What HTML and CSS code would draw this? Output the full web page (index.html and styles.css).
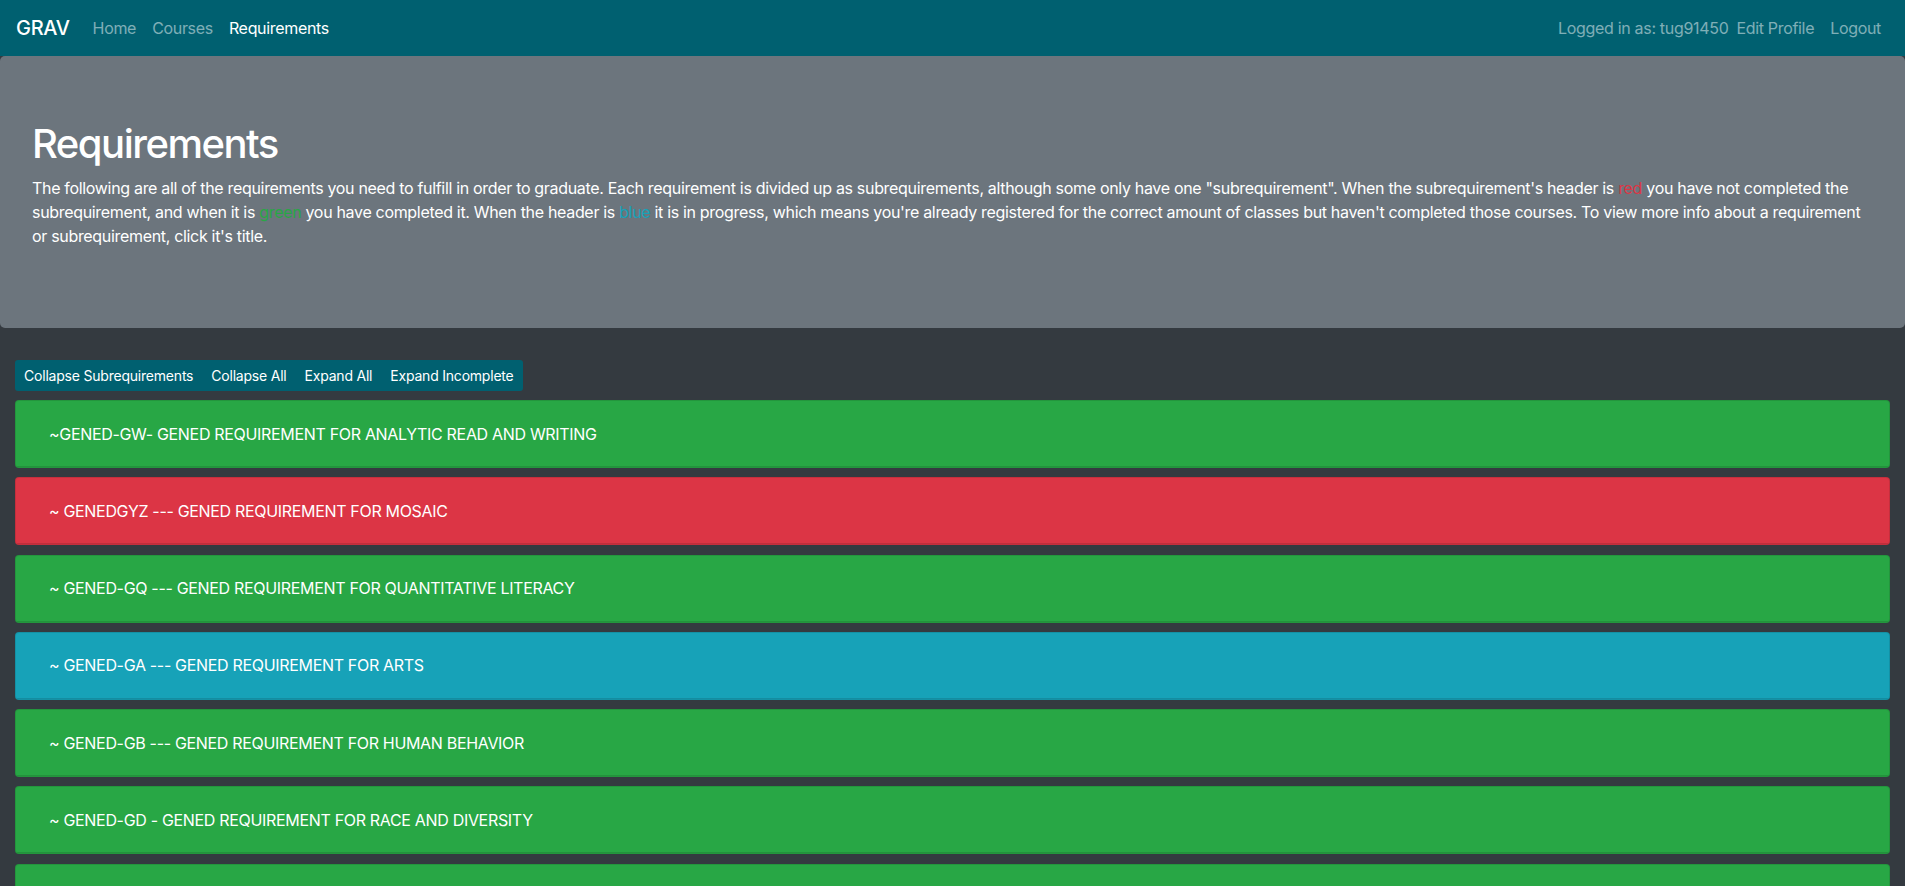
FILE: index.html
```html
<!DOCTYPE html>
<html lang="en">
<head>
<meta charset="utf-8">
<title>Requirements</title>
<link rel="stylesheet" href="styles.css">
</head>
<body>
<nav class="navbar">
  <a class="brand" href="#">GRAV</a>
  <ul class="nav">
    <li><a class="nav-link" href="#">Home</a></li>
    <li><a class="nav-link" href="#">Courses</a></li>
    <li><a class="nav-link active" href="#">Requirements</a></li>
  </ul>
  <div class="nav-right">
    <span class="nav-text">Logged in as: tug91450</span>
    <a class="nav-link" href="#">Edit Profile</a>
    <a class="nav-link" href="#">Logout</a>
  </div>
</nav>

<section class="jumbotron">
  <h1 class="title">Requirements</h1>
  <p class="lead">The following are all of the requirements you need to fulfill in order to graduate. Each requirement is divided up as subrequirements, although some only have one "subrequirement". When the subrequirement's header is <span class="t-red">red</span> you have not completed the subrequirement, and when it is <span class="t-green">green</span> you have completed it. When the header is <span class="t-blue">blue</span> it is in progress, which means you're already registered for the correct amount of classes but haven't completed those courses. To view more info about a requirement or subrequirement, click it's title.</p>
</section>

<main class="content">
  <div class="btn-group">
    <button class="btn">Collapse Subrequirements</button>
    <button class="btn">Collapse All</button>
    <button class="btn">Expand All</button>
    <button class="btn">Expand Incomplete</button>
  </div>

  <div class="req-list">
    <div class="req green"><div class="req-header"><button class="req-title">~GENED-GW- GENED REQUIREMENT FOR ANALYTIC READ AND WRITING</button></div></div>
    <div class="req red"><div class="req-header"><button class="req-title">~ GENEDGYZ --- GENED REQUIREMENT FOR MOSAIC</button></div></div>
    <div class="req green"><div class="req-header"><button class="req-title">~ GENED-GQ --- GENED REQUIREMENT FOR QUANTITATIVE LITERACY</button></div></div>
    <div class="req blue"><div class="req-header"><button class="req-title">~ GENED-GA --- GENED REQUIREMENT FOR ARTS</button></div></div>
    <div class="req green"><div class="req-header"><button class="req-title">~ GENED-GB --- GENED REQUIREMENT FOR HUMAN BEHAVIOR</button></div></div>
    <div class="req green"><div class="req-header"><button class="req-title">~ GENED-GD - GENED REQUIREMENT FOR RACE AND DIVERSITY</button></div></div>
    <div class="req green"><div class="req-header"><button class="req-title">~ GENED-GG --- GENED REQUIREMENT FOR GLOBAL/WORLD SOCIETY</button></div></div>
  </div>
</main>
</body>
</html>
```

FILE: styles.css
```css
* { box-sizing: border-box; }

html, body {
  margin: 0;
  padding: 0;
}

body {
  background: #343a40;
  font-family: Inter, "Noto Sans", "Liberation Sans", sans-serif;
  font-size: 16px;
  line-height: 1.5;
  letter-spacing: -0.02em;
  color: #fff;
  overflow: hidden;
}

a { text-decoration: none; }

/* Navbar */
.navbar {
  display: flex;
  align-items: center;
  height: 56px;
  padding: 8px 16px;
  background: #006070;
}

.brand {
  font-size: 20px;
  line-height: 30px;
  color: #fff;
  margin-right: 15px;
  font-weight: 500;
}

.nav {
  display: flex;
  list-style: none;
  margin: 0;
  padding: 0;
}

.nav-link {
  display: block;
  padding: 8px;
  color: rgba(255, 255, 255, 0.5);
}

.nav-link.active {
  color: #fff;
}

.nav-right {
  display: flex;
  align-items: center;
  margin-left: auto;
}

.nav-text {
  color: rgba(255, 255, 255, 0.5);
  padding: 8px 0;
}

/* Jumbotron */
.jumbotron {
  background: #6c757d;
  border-radius: 5px;
  padding: 64px 32px;
  margin-bottom: 32px;
}

.title {
  margin: 0 0 8px;
  font-size: 40px;
  line-height: 48px;
  font-weight: 500;
  letter-spacing: -1.5px;
}

.lead {
  margin: 0 0 16px;
  font-size: 16px;
  line-height: 24px;
}

.t-red { color: #dc3545; }
.t-green { color: #28a745; }
.t-blue { color: #17a2b8; }

/* Content */
.content {
  padding: 0 15px;
}

.btn-group {
  display: inline-flex;
  background: #006070;
  border-radius: 3px;
  margin-bottom: 9px;
}

.btn {
  font-family: inherit;
  letter-spacing: -0.015em;
  font-size: 14px;
  line-height: 21px;
  padding: 4px 8px;
  border: 1px solid transparent;
  background: transparent;
  color: #fff;
  cursor: pointer;
}

.req-list {
  display: flex;
  flex-direction: column;
  gap: 9.3px;
}

.req {
  border: 1px solid rgba(0, 0, 0, 0.1);
  border-radius: 4px;
  overflow: hidden;
}

.req.green { background: #28a745; }
.req.red { background: #dc3545; }
.req.blue { background: #17a2b8; }

.req-header {
  display: flex;
  align-items: center;
  height: 66px;
  padding: 0 20px;
  border-bottom: 1px solid rgba(0, 0, 0, 0.125);
}

.req-title {
  font-family: inherit;
  letter-spacing: inherit;
  font-size: 16px;
  line-height: 24px;
  padding: 6px 12px;
  border: 1px solid transparent;
  background: transparent;
  color: #fff;
  text-align: left;
  cursor: pointer;
}
```
